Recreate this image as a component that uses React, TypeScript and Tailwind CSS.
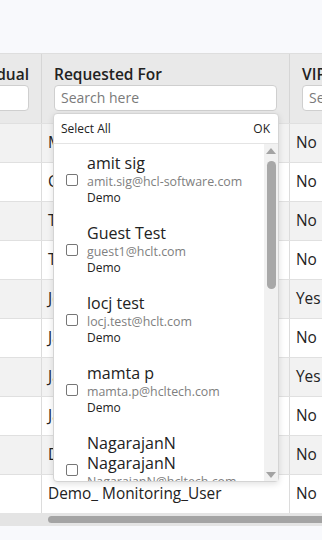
import React from "react";

interface User {
  name: string;
  email: string;
  group: string;
}

const users: User[] = [
  { name: "amit sig", email: "amit.sig@hcl-software.com", group: "Demo" },
  { name: "Guest Test", email: "guest1@hclt.com", group: "Demo" },
  { name: "locj test", email: "locj.test@hclt.com", group: "Demo" },
  { name: "mamta p", email: "mamta.p@hcltech.com", group: "Demo" },
  { name: "NagarajanN NagarajanN", email: "NagarajanN@hcltech.com", group: "Demo" }
];

const rows = [
  { req: "Mamta P", vip: "No" },
  { req: "Chetan K", vip: "No" },
  { req: "Test User", vip: "No" },
  { req: "Test Demo", vip: "No" },
  { req: "John Smith", vip: "Yes" },
  { req: "James Doe", vip: "No" },
  { req: "Jane Roe", vip: "Yes" },
  { req: "Jack Lee", vip: "No" },
  { req: "Demo User", vip: "No" },
  { req: "Demo_ Monitoring_User", vip: "No" }
];

const SearchBox = () => (
  <div className="h-[26px] w-full overflow-hidden whitespace-nowrap rounded-[4px] border border-[#cfcfcf] bg-white px-[6px] text-[14px] leading-[24px] text-[#7a7a7a]">
    Search here
  </div>
);

const UserPicker = () => (
  <div className="absolute left-[53px] top-[113px] flex h-[369px] w-[226px] flex-col rounded-[4px] border border-[#d4d4d4] bg-white shadow-[0_2px_6px_rgba(0,0,0,0.12)]">
    <div className="flex h-[30px] items-center justify-between border-b border-[#e4e4e4] pl-[7px] pr-[8px] text-[12px] text-[#222]">
      <span>Select All</span>
      <span>OK</span>
    </div>
    <div className="flex min-h-0 flex-1">
      <div className="flex-1 overflow-hidden">
        {users.map((u) => (
          <div key={u.email} className="flex items-center pb-[8px] pt-[9px]">
            <div className="ml-[12px] mr-[9px] h-[12px] w-[12px] shrink-0 rounded-[2px] border-[1.5px] border-[#767676]" />
            <div className="min-w-0 pr-2">
              <div className="text-[16px] leading-[20px] text-[#222]">{u.name}</div>
              <div className="text-[12.4px] leading-[17px] text-[#808080]">{u.email}</div>
              <div className="text-[12px] leading-[16px] text-[#222]">{u.group}</div>
            </div>
          </div>
        ))}
      </div>
      <div className="flex w-[14px] flex-col items-center bg-[#f1f1f1] pb-[3px] pt-[4px]">
        <div className="h-0 w-0 border-x-[5px] border-b-[6px] border-x-transparent border-b-[#a3a3a3]" />
        <div className="mt-[7px] h-[128px] w-[9px] rounded-full bg-[#a8a8a8]" />
        <div className="flex-1" />
        <div className="h-0 w-0 border-x-[5px] border-t-[6px] border-x-transparent border-t-[#a3a3a3]" />
      </div>
    </div>
  </div>
);

export default function App() {
  return (
    <div className="relative h-[540px] w-[322px] overflow-hidden bg-[#f8f9fc] font-['Open_Sans',sans-serif] text-[#222]">
      <div className="h-[53px]" />
      <div className="overflow-hidden border-t border-[#dedede]">
        <div className="ml-[-139px] flex w-[540px] bg-[#e9e9e9]">
          <div className="w-[181px] shrink-0 border-r border-[#d6d6d6] px-[12px] pb-[12px] pt-[9px]">
            <div className="text-right text-[15.5px] font-semibold leading-[22px]">Individual</div>
            <SearchBox />
          </div>
          <div className="w-[248px] shrink-0 border-r border-[#d6d6d6] px-[12px] pb-[12px] pt-[9px]">
            <div className="text-[15.5px] font-semibold leading-[22px]">Requested For</div>
            <SearchBox />
          </div>
          <div className="w-[110px] shrink-0 px-[12px] pb-[12px] pt-[9px]">
            <div className="text-[15.5px] font-semibold leading-[22px]">VIP</div>
            <SearchBox />
          </div>
        </div>
        <div className="ml-[-139px] w-[540px]">
          {rows.map((r, i) => (
            <div
              key={i}
              className={`flex h-[39px] border-t border-[#e0e0e0] text-[15.4px] leading-[38px] ${
                i % 2 === 0 ? "bg-[#f2f2f2]" : "bg-white"
              }`}
            >
              <div className="w-[181px] shrink-0 border-r border-[#dcdcdc]" />
              <div className="w-[248px] shrink-0 overflow-hidden whitespace-nowrap border-r border-[#dcdcdc] pl-[6px]">
                {r.req}
              </div>
              <div className="w-[110px] shrink-0 pl-[6px]">{r.vip}</div>
            </div>
          ))}
        </div>
        <div className="bg-[#e4e4e4] pb-[3px] pl-[48px] pt-[3px]">
          <div className="h-[7px] w-[300px] rounded-l-full bg-[#a4a4a4]" />
        </div>
      </div>
      <UserPicker />
    </div>
  );
}
